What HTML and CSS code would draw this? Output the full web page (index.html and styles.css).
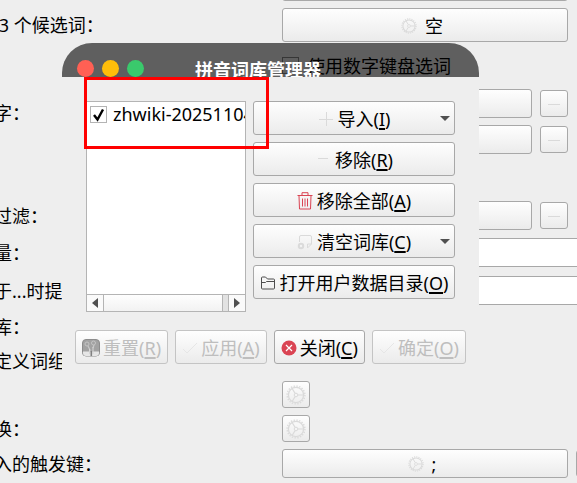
FILE: index.html
```
<!DOCTYPE html>
<html lang="zh-CN">
<head>
  <meta charset="UTF-8" />
  <meta name="viewport" content="width=device-width, initial-scale=1.0" />
  <title>拼音词库管理器</title>
  <link rel="stylesheet" href="styles.css">
</head>
<body>
  <svg class="symbols" aria-hidden="true">
    <symbol id="gear" viewBox="0 0 20 20">
      <circle cx="10" cy="10" r="8.9" fill="none" stroke="currentColor" stroke-width="1.4" stroke-dasharray="1.4 1.4" />
      <circle cx="10" cy="10" r="7.6" fill="none" stroke="currentColor" stroke-width="1.3" />
      <circle cx="10" cy="10" r="1.8" fill="none" stroke="currentColor" />
      <path d="M12 10h6M9 8.2L6 3.2M9 11.8l-3 5" fill="none" stroke="currentColor" stroke-width="1.2" />
    </symbol>
    <symbol id="minus" viewBox="0 0 16 16">
      <path d="M2 8.5h12" stroke="currentColor" />
    </symbol>
    <symbol id="check" viewBox="0 0 16 16">
      <path d="M1 9l4 4L15 3" fill="none" stroke="currentColor" />
    </symbol>
  </svg>

  <main class="form">
    <div class="row">
      <span class="name"></span>
      <button class="btn wide tall" aria-label="快捷键"></button>
    </div>
    <div class="row">
      <label class="name" for="third">&nbsp;3 个候选词：</label>
      <button class="btn wide tall" id="third"><svg class="icon faint"><use href="#gear" /></svg><span class="key">空</span></button>
    </div>
    <div class="row option">
      <span class="name"></span>
      <input type="checkbox" class="box" id="keypad" />
      <label for="keypad">使用数字键盘选词</label>
    </div>
    <div class="row">
      <label class="name between" for="char1">字：</label>
      <button class="btn wide" id="char1"></button>
      <button class="btn small" aria-label="移除"><svg class="icon faint"><use href="#minus" /></svg></button>
    </div>
    <div class="row">
      <span class="name"></span>
      <button class="btn wide" aria-label="快捷键"></button>
      <button class="btn small" aria-label="移除"><svg class="icon faint"><use href="#minus" /></svg></button>
    </div>
    <div class="row option"></div>
    <div class="row">
      <label class="name" for="filter">过滤：</label>
      <button class="btn wide" id="filter"></button>
      <button class="btn small" aria-label="移除"><svg class="icon faint"><use href="#minus" /></svg></button>
    </div>
    <div class="row field">
      <label class="name" for="amount">量：</label>
      <input type="text" class="text" id="amount" />
    </div>
    <div class="row field">
      <label class="name" for="hint">于...时提示：</label>
      <input type="text" class="text" id="hint" />
    </div>
    <div class="row plain"><span class="name">库：</span></div>
    <div class="row plain"><span class="name">定义词组：</span></div>
    <div class="row plain">
      <span class="name"></span>
      <button class="btn small" aria-label="设置"><svg class="icon big faint"><use href="#gear" /></svg></button>
    </div>
    <div class="row plain">
      <label class="name" for="switch">换：</label>
      <button class="btn small" id="switch"><svg class="icon big faint"><use href="#gear" /></svg></button>
    </div>
    <div class="row trigger">
      <label class="name" for="trigger">入的触发键：</label>
      <button class="btn wide" id="trigger"><svg class="icon faint"><use href="#gear" /></svg><span class="key">;</span></button>
      <button class="btn small" aria-label="移除"></button>
    </div>
  </main>

  <section class="dialog" role="dialog" aria-labelledby="dialogTitle">
    <header class="titlebar">
      <button class="light red" aria-label="关闭"></button>
      <button class="light yellow" aria-label="最小化"></button>
      <button class="light green" aria-label="最大化"></button>
      <h1 id="dialogTitle">拼音词库管理器</h1>
    </header>
    <div class="content">
      <div class="manager">
        <div class="list">
          <div class="items">
            <input type="checkbox" class="box" id="zhwiki" checked />
            <label for="zhwiki">zhwiki-20251104.dict</label>
          </div>
          <div class="scrollbar">
            <button class="arrow" aria-label="向左"><svg viewBox="0 0 6 10"><path d="M6 0v10L0 5z" /></svg></button>
            <div class="thumb"></div>
            <button class="arrow" aria-label="向右"><svg viewBox="0 0 6 10"><path d="M0 0v10l6-5z" /></svg></button>
          </div>
        </div>
        <div class="actions">
          <button class="btn tall menu"><svg class="icon faint" viewBox="0 0 16 16"><path d="M8.5 1v14M1 8.5h14" stroke="currentColor" /></svg><span>导入(<u>I</u>)</span></button>
          <button class="btn tall"><svg class="icon faint" viewBox="0 0 16 16"><path d="M3 6.5h10" stroke="currentColor" /></svg><span>移除(<u>R</u>)</span></button>
          <button class="btn tall"><svg class="icon trash" viewBox="0 0 16 18"><path d="M.5 3.5h15M5 3V.7h6V3M2 4l.5 13h11L14 4M5.5 6.5v8M8 6.5v8M10.5 6.5v8" fill="none" stroke="currentColor" /></svg><span>移除全部(<u>A</u>)</span></button>
          <button class="btn tall menu"><svg class="icon faint" viewBox="0 0 16 16"><path d="M2.5 8V3q0-1.500 1.500-1.500h9q1.500 0 1.500 1.500v7l-4 4v-4h4" fill="none" stroke="currentColor" /><circle cx="4" cy="12" r="2.200" fill="none" stroke="currentColor" stroke-width="2" /></svg><span>清空词库(<u>C</u>)</span></button>
          <button class="btn tall"><svg class="icon folder" viewBox="0 0 16 16"><path d="M1.500 13V3q0-1 1-1h3l2 2h6q1 0 1 1v8q0 1-1 1h-11q-1 0-1-1zM1.500 7.500h4l1-1h8" fill="none" stroke="currentColor" /></svg><span>打开用户数据目录(<u>O</u>)</span></button>
        </div>
      </div>
      <footer class="buttons">
        <button class="btn tall" disabled>
          <svg class="icon reset" viewBox="0 0 18 18"><rect x=".5" y=".5" width="17" height="16.500" rx="3.500" fill="#a2a2a2" stroke="#8c8c8c" /><path d="M1 12.500h16V14q0 3-3 3H4q-3 0-3-3z" fill="#e6e6e6" /><circle cx="5" cy="5" r="2" fill="none" stroke="#c4c4c4" /><circle cx="11.500" cy="4" r="2" fill="none" stroke="#c4c4c4" /><path d="M6 7l2 4v2M12 6l-1 3" fill="none" stroke="#c8c8c8" stroke-width="1.200" /><path d="M7.500 10v5M11 8v7" stroke="#d6d6d6" /><path d="M9.300 12v5" stroke="#808080" stroke-width="1.600" /></svg>
          <span>重置(<u>R</u>)</span>
        </button>
        <button class="btn tall" disabled><svg class="icon ghost"><use href="#check" /></svg><span>应用(<u>A</u>)</span></button>
        <button class="btn tall"><svg class="icon" viewBox="0 0 16 16"><circle cx="8" cy="8" r="7.500" fill="#da4453" /><path d="M5 5l6 6M11 5l-6 6" stroke="#fff" stroke-width="1.200" /></svg><span>关闭(<u>C</u>)</span></button>
        <button class="btn tall" disabled><svg class="icon ghost"><use href="#check" /></svg><span>确定(<u>O</u>)</span></button>
      </footer>
    </div>
  </section>

  <div class="highlight"></div>
</body>
</html>
```
FILE: styles.css
```
* {
  box-sizing: border-box;
}
body {
  margin: 0;
  height: 100vh;
  position: relative;
  overflow: hidden;
  background: #eee;
  color: #000;
  font: 18px/24px "Noto Sans", "Noto Sans CJK SC", sans-serif;
}
button,
input {
  font: inherit;
  color: inherit;
  margin: 0;
}
.symbols {
  display: none;
}

/* settings form behind the dialog, scrolled a little */
.form {
  display: flex;
  flex-direction: column;
  gap: 7px;
  margin: -33px 9px 0 -6px;
}
.row {
  display: flex;
  align-items: center;
  gap: 8px;
}
.option {
  height: 33px;
}
.field {
  height: 31px;
  margin-right: -20px;
}
.plain {
  height: 27px;
}
.trigger {
  margin-right: -36px;
}
.name {
  width: 280px;
  flex: none;
  white-space: nowrap;
}
.between {
  align-self: flex-start;
  height: 29px;
  padding-top: 12px;
}

.btn {
  display: flex;
  align-items: center;
  justify-content: center;
  gap: 4px;
  height: 29px;
  padding: 0;
  border: 1px solid #a8a8a8;
  border-radius: 3px;
  background: linear-gradient(#fefefe, #ebebeb);
  white-space: nowrap;
}
.btn:disabled {
  border-color: #c4c4c4;
  color: #bebebe;
}
.btn u {
  text-underline-offset: 2px;
  text-decoration-thickness: 2px;
  text-decoration-skip-ink: none;
}
.wide {
  flex: 1;
}
.tall {
  height: 34px;
  padding-top: 1px;
}
.small {
  width: 28px;
  height: 27px;
  flex: none;
}
.key {
  padding: 0 6px 0 4px;
}
.icon {
  width: 16px;
  height: 16px;
  flex: none;
}
.big {
  width: 20px;
  height: 20px;
}
.faint {
  color: #dadada;
}
.ghost {
  color: #e6e6e6;
}
.trash {
  height: 18px;
  color: #da4453;
}
.folder {
  color: #4d4d4d;
}
.reset {
  width: 18px;
  height: 18px;
}
.text {
  flex: 1;
  height: 29px;
  border: 1px solid #a8a8a8;
  border-radius: 3px;
  background: #fff;
}
.box {
  appearance: none;
  width: 17px;
  height: 17px;
  flex: none;
  border: 1px solid #b4b4b4;
}
.form .box {
  border-color: #888;
}
.box:checked {
  background: #fff url("data:image/svg+xml,%3Csvg xmlns='http://www.w3.org/2000/svg' viewBox='0 0 15 15'%3E%3Cpath d='M3 8l3.500 4.500 5.500-10' fill='none' stroke='%23000' stroke-width='2.400'/%3E%3C/svg%3E");
}

.dialog {
  position: absolute;
  top: 43px;
  left: 62px;
  width: 417px;
}
.titlebar {
  display: flex;
  align-items: flex-start;
  gap: 8px;
  height: 34px;
  padding: 17px 15px 0;
  overflow: hidden;
  border-radius: 30px 30px 0 0;
  background: rgba(0, 0, 0, 0.6);
}
.titlebar h1 {
  margin: 0 0 0 43px;
  color: #fff;
  font-size: 18px;
  line-height: 20px;
}
.light {
  width: 17px;
  height: 17px;
  padding: 0;
  border: 0;
  border-radius: 50%;
}
.red {
  background: #ff6054;
}
.yellow {
  background: #ffbe0a;
}
.green {
  background: #3ac96c;
}
.content {
  padding: 24px 13px 12px;
  background: #eee;
}
.manager {
  display: flex;
  gap: 7px;
  min-height: 211px;
  padding: 0 11px;
}
.list {
  display: flex;
  flex-direction: column;
  flex: 1;
  min-width: 0;
  border: 1px solid #b4b4b4;
  background: #fff;
}
.items {
  display: flex;
  align-items: center;
  gap: 6px;
  height: 24px;
  margin-bottom: auto;
  padding-left: 3px;
  overflow: hidden;
  line-height: 22px;
  white-space: nowrap;
}
.scrollbar {
  display: flex;
  height: 17px;
  border-top: 1px solid #b4b4b4;
  background: #e2e2e2;
}
.arrow {
  display: flex;
  align-items: center;
  justify-content: center;
  width: 17px;
  padding: 0;
  border: 0;
  border-right: 1px solid #b4b4b4;
  background: #fafafa;
}
.arrow:last-child {
  border-right: 0;
  border-left: 1px solid #b4b4b4;
}
.arrow svg {
  width: 6px;
  height: 10px;
  fill: #505050;
}
.thumb {
  flex: 1;
  margin-right: 5px;
  border-right: 1px solid #b4b4b4;
  background: linear-gradient(#fefefe, #f2f2f2);
}
.actions {
  display: flex;
  flex-direction: column;
  gap: 7px;
  width: 202px;
}
.menu {
  position: relative;
}
.menu::after {
  content: "";
  position: absolute;
  top: 14px;
  right: 4px;
  border: 5px solid transparent;
  border-top-color: #505050;
  border-bottom: 0;
}
.buttons {
  display: flex;
  gap: 7px;
  margin-top: 18px;
}
.buttons .btn {
  flex: 1 1 auto;
  gap: 3px;
}

/* red marker round the list entry */
.highlight {
  position: absolute;
  top: 77px;
  left: 84px;
  width: 185px;
  height: 72px;
  border: 3px solid #f00;
}
```
